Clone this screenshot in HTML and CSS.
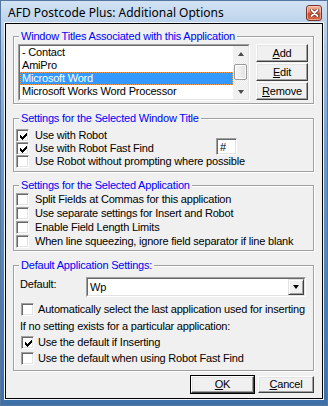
FILE: index.html
```html
<!DOCTYPE html>
<html>
<head>
<meta charset="utf-8">
<link rel="stylesheet" href="styles.css">
</head>
<body>
<div class="window">
  <div class="titlebar">
    <span class="title">AFD Postcode Plus: Additional Options</span>
    <span class="close"><svg width="9" height="8" viewBox="0 0 9 8"><path d="M1.5 1 L7.5 7 M7.5 1 L1.5 7" stroke="#6a2a1c" stroke-width="3.4" stroke-linecap="round"/><path d="M1.5 1 L7.5 7 M7.5 1 L1.5 7" stroke="#fff" stroke-width="1.8" stroke-linecap="round"/></svg></span>
  </div>
  <div class="client">
    <section class="group g1">
      <div class="gtitle">Window Titles Associated with this Application</div>
      <div class="g1-body">
        <div class="listbox">
          <div class="listbox-in">
            <ul class="items">
              <li>- Contact</li>
              <li>AmiPro</li>
              <li class="sel">Microsoft Word</li>
              <li>Microsoft Works Word Processor</li>
              <li>Inland D</li>
            </ul>
            <div class="vscroll">
              <span class="sbtn"><span class="tri-up"></span></span>
              <span class="thumb"></span>
              <span class="sbtn"><span class="tri-down"></span></span>
            </div>
          </div>
        </div>
        <div class="sidebtns">
          <div class="btn"><span><u>A</u>dd</span></div>
          <div class="btn"><span><u>E</u>dit</span></div>
          <div class="btn"><span><u>R</u>emove</span></div>
        </div>
      </div>
    </section>

    <section class="group g2">
      <div class="gtitle">Settings for the Selected Window Title</div>
      <div class="rows">
        <div class="row"><span class="cb on"><svg width="7" height="7" viewBox="0 0 7 7"><path d="M0 2h1v1h1v1h1v-1h1v-1h1v-1h1v-1h1v3h-1v1h-1v1h-1v1h-1v1h-1v-1h-1v-1h-1z" fill="#000"/></svg></span><span>Use with Robot</span></div>
        <div class="row"><span class="cb on"><svg width="7" height="7" viewBox="0 0 7 7"><path d="M0 2h1v1h1v1h1v-1h1v-1h1v-1h1v-1h1v3h-1v1h-1v1h-1v1h-1v1h-1v-1h-1v-1h-1z" fill="#000"/></svg></span><span class="ff-label">Use with Robot Fast Find</span><span class="textbox">#</span></div>
        <div class="row"><span class="cb"></span><span>Use Robot without prompting where possible</span></div>
      </div>
    </section>

    <section class="group g3">
      <div class="gtitle">Settings for the Selected Application</div>
      <div class="rows">
        <div class="row"><span class="cb"></span><span>Split Fields at Commas for this application</span></div>
        <div class="row"><span class="cb"></span><span>Use separate settings for Insert and Robot</span></div>
        <div class="row"><span class="cb"></span><span>Enable Field Length Limits</span></div>
        <div class="row"><span class="cb"></span><span>When line squeezing, ignore field separator if line blank</span></div>
      </div>
    </section>

    <section class="group g4">
      <div class="gtitle">Default Application Settings:</div>
      <div class="def-row">
        <span class="def-label">Default:</span>
        <div class="combo">
          <div class="combo-in">
            <span class="combo-text">Wp</span>
            <span class="combo-btn"><span class="tri-black"></span></span>
          </div>
        </div>
      </div>
      <div class="row r4 auto"><span class="cb"></span><span>Automatically select the last application used for inserting</span></div>
      <div class="note">If no setting exists for a particular application:</div>
      <div class="row r4 ins"><span class="cb on"><svg width="7" height="7" viewBox="0 0 7 7"><path d="M0 2h1v1h1v1h1v-1h1v-1h1v-1h1v-1h1v3h-1v1h-1v1h-1v1h-1v1h-1v-1h-1v-1h-1z" fill="#000"/></svg></span><span>Use the default if Inserting</span></div>
      <div class="row r4 rff"><span class="cb"></span><span>Use the default when using Robot Fast Find</span></div>
    </section>

    <div class="dlg-btns">
      <div class="btn ok"><span><u>O</u>K</span></div>
      <div class="btn cancel"><span><u>C</u>ancel</span></div>
    </div>
  </div>
</div>
</body>
</html>
```

FILE: styles.css
```css
html, body {
  margin: 0;
  padding: 0;
}
body {
  width: 328px;
  height: 406px;
  overflow: hidden;
  font-family: "Liberation Sans", Arial, sans-serif;
  font-size: 11px;
  line-height: 13px;
  letter-spacing: -0.2px;
  color: #000;
}
.window {
  width: 328px;
  height: 406px;
  box-sizing: border-box;
  display: flex;
  flex-direction: column;
  background: linear-gradient(#d3e3f4 0px, #bdd3eb 23px, #9bbbe0 70px, #6c9acc 160px, #4a7fb7 300px, #3d70a8 406px);
  box-shadow: inset 0 0 0 1px #54789f;
}
.titlebar {
  height: 23px;
  flex: none;
  display: flex;
  align-items: flex-start;
  justify-content: space-between;
  padding: 0 6px 0 8px;
}
.title {
  font-family: "Noto Sans", "Open Sans", sans-serif;
  font-size: 12px;
  letter-spacing: 0;
  line-height: 16px;
  margin-top: 5px;
  color: #000;
}
.close {
  width: 16px;
  height: 16px;
  margin-top: 5px;
  box-sizing: border-box;
  border: 1px solid #7a3426;
  border-radius: 3px;
  background: linear-gradient(#f2b49e 0%, #e58a6c 40%, #cc4a2c 55%, #d96a48 100%);
  box-shadow: inset 0 0 0 1px rgba(255, 230, 220, 0.45);
  display: flex;
  align-items: center;
  justify-content: center;
}
.close svg { display: block; }

.client {
  flex: 1;
  margin: 0 5px 7px;
  border: 1px solid #000;
  box-shadow: 0 0 0 1px #eef4fa;
  background: #f0f0f0;
  padding: 12px 0 0 7px;
  display: flex;
  flex-direction: column;
  min-height: 0;
}

.group {
  width: 301px;
  box-sizing: border-box;
  border: 1px solid #a0a0a0;
  box-shadow: inset 1px 1px 0 #fff, 1px 1px 0 #fff;
  display: flex;
  flex-direction: column;
  flex: none;
}
.gtitle {
  align-self: flex-start;
  margin: -7px 0 0 5px;
  padding: 0 2px;
  background: #f0f0f0;
  color: #0000ff;
  line-height: 13px;
  white-space: nowrap;
}

/* group 1 */
.g1 { padding-bottom: 2px; }
.g1-body {
  display: flex;
  align-items: flex-start;
  gap: 6px;
  padding: 1px 0 0 4px;
}
.listbox {
  width: 232px;
  height: 57px;
  box-sizing: border-box;
  border: 1px solid;
  border-color: #a0a0a0 #fff #fff #a0a0a0;
  flex: none;
}
.listbox-in {
  height: 100%;
  box-sizing: border-box;
  border: 1px solid;
  border-color: #696969 #e3e3e3 #e3e3e3 #696969;
  background: #fff;
  display: flex;
  overflow: hidden;
}
.items {
  list-style: none;
  margin: 0;
  padding: 0;
  flex: 1;
  min-width: 0;
}
.items li {
  height: 13px;
  line-height: 13px;
  padding-left: 2px;
  white-space: nowrap;
  overflow: hidden;
}
.items li.sel {
  background: #3399ff;
  color: #fff;
  outline: 1px dotted #f29a4a;
  outline-offset: -1px;
}
.vscroll {
  width: 15px;
  flex: none;
  display: flex;
  flex-direction: column;
  background-color: #f4f4f4;
  background-image: repeating-conic-gradient(#e6e6e6 0 25%, #fbfbfb 0 50%);
  background-size: 2px 2px;
}
.sbtn {
  height: 15px;
  display: flex;
  align-items: center;
  justify-content: center;
  background: #f0f0f0;
  flex: none;
}
.tri-up {
  width: 0; height: 0;
  border-left: 3.5px solid transparent;
  border-right: 3.5px solid transparent;
  border-bottom: 4px solid #4a4a4a;
}
.tri-down {
  width: 0; height: 0;
  border-left: 3.5px solid transparent;
  border-right: 3.5px solid transparent;
  border-top: 4px solid #4a4a4a;
}
.thumb {
  margin: 3px 1px auto 1px;
  height: 16px;
  box-sizing: border-box;
  border: 1px solid #9a9a9a;
  border-radius: 2px;
  background: linear-gradient(to right, #f6f6f6, #e2e2e2);
  box-shadow: inset 0 0 0 1px #fff;
}

.sidebtns {
  display: flex;
  flex-direction: column;
  gap: 1px;
}
.btn {
  height: 18px;
  width: 52px;
  box-sizing: border-box;
  border: 1px solid;
  border-color: #fff #404040 #404040 #fff;
  box-shadow: inset -1px -1px 0 #a0a0a0, inset 1px 1px 0 #e3e3e3;
  background: #f0f0f0;
  display: flex;
  align-items: center;
  justify-content: center;
}
.btn u { text-decoration: underline; text-underline-offset: 1px; }

/* checkbox rows */
.rows {
  display: flex;
  flex-direction: column;
}
.g2 .rows { padding-top: 4px; gap: 0; }
.g2 { padding-bottom: 3px; margin-top: 14px; }
.g3 { margin-top: 13px; padding-bottom: 2px; }
.g3 .rows { padding-top: 1px; gap: 1px; }
.row {
  height: 13px;
  display: flex;
  align-items: center;
  padding-left: 2px;
  white-space: nowrap;
}
.cb {
  width: 13px;
  height: 13px;
  box-sizing: border-box;
  flex: none;
  border: 1px solid;
  border-color: #a0a0a0 #fff #fff #a0a0a0;
  box-shadow: inset 1px 1px 0 #696969, inset -1px -1px 0 #e3e3e3;
  background: #fff;
  margin-right: 6px;
  display: flex;
  align-items: center;
  justify-content: center;
}
.cb svg { display: block; margin: 1px 0 0 1px; }
.ff-label { width: 181px; flex: none; }
.textbox {
  align-self: flex-start;
  margin-top: -4px;
  width: 21px;
  height: 17px;
  box-sizing: border-box;
  border: 1px solid;
  border-color: #a0a0a0 #fff #fff #a0a0a0;
  box-shadow: inset 1px 1px 0 #696969, inset -1px -1px 0 #e3e3e3;
  background: #fff;
  padding: 2px 0 0 3px;
  line-height: 13px;
  flex: none;
}

/* group 4 */
.g4 { margin-top: 14px; padding-bottom: 5px; }
.def-row {
  display: flex;
  align-items: flex-start;
  margin-top: 5px;
  padding-left: 6px;
}
.def-label {
  width: 66px;
  flex: none;
  margin-top: 1px;
}
.combo {
  width: 220px;
  height: 20px;
  box-sizing: border-box;
  border: 1px solid;
  border-color: #a0a0a0 #fff #fff #a0a0a0;
  flex: none;
}
.combo-in {
  height: 100%;
  box-sizing: border-box;
  border: 1px solid;
  border-color: #696969 #e3e3e3 #e3e3e3 #696969;
  background: #fff;
  display: flex;
  align-items: stretch;
}
.combo-text {
  flex: 1;
  padding: 2px 0 0 2px;
  line-height: 13px;
}
.combo-btn {
  width: 16px;
  box-sizing: border-box;
  border: 1px solid;
  border-color: #e3e3e3 #404040 #404040 #e3e3e3;
  box-shadow: inset 1px 1px 0 #fff, inset -1px -1px 0 #a0a0a0;
  background: #f0f0f0;
  display: flex;
  align-items: center;
  justify-content: center;
}
.tri-black {
  width: 0; height: 0;
  border-left: 3.5px solid transparent;
  border-right: 3.5px solid transparent;
  border-top: 4px solid #000;
}
.r4 { padding-left: 7px; }
.r4 .cb { margin-right: 4px; }
.auto { margin-top: 6px; }
.note { margin-top: 4px; padding-left: 6px; white-space: nowrap; }
.ins { margin-top: 3px; }
.rff { margin-top: 3px; }

.dlg-btns {
  width: 301px;
  display: flex;
  justify-content: flex-end;
  gap: 3px;
  margin-top: 5px;
}
.dlg-btns .btn { height: 17px; }
.btn.ok {
  width: 63px;
  outline: 1px solid #000;
  margin-right: 1px;
}
.btn.cancel { width: 56px; }
```
